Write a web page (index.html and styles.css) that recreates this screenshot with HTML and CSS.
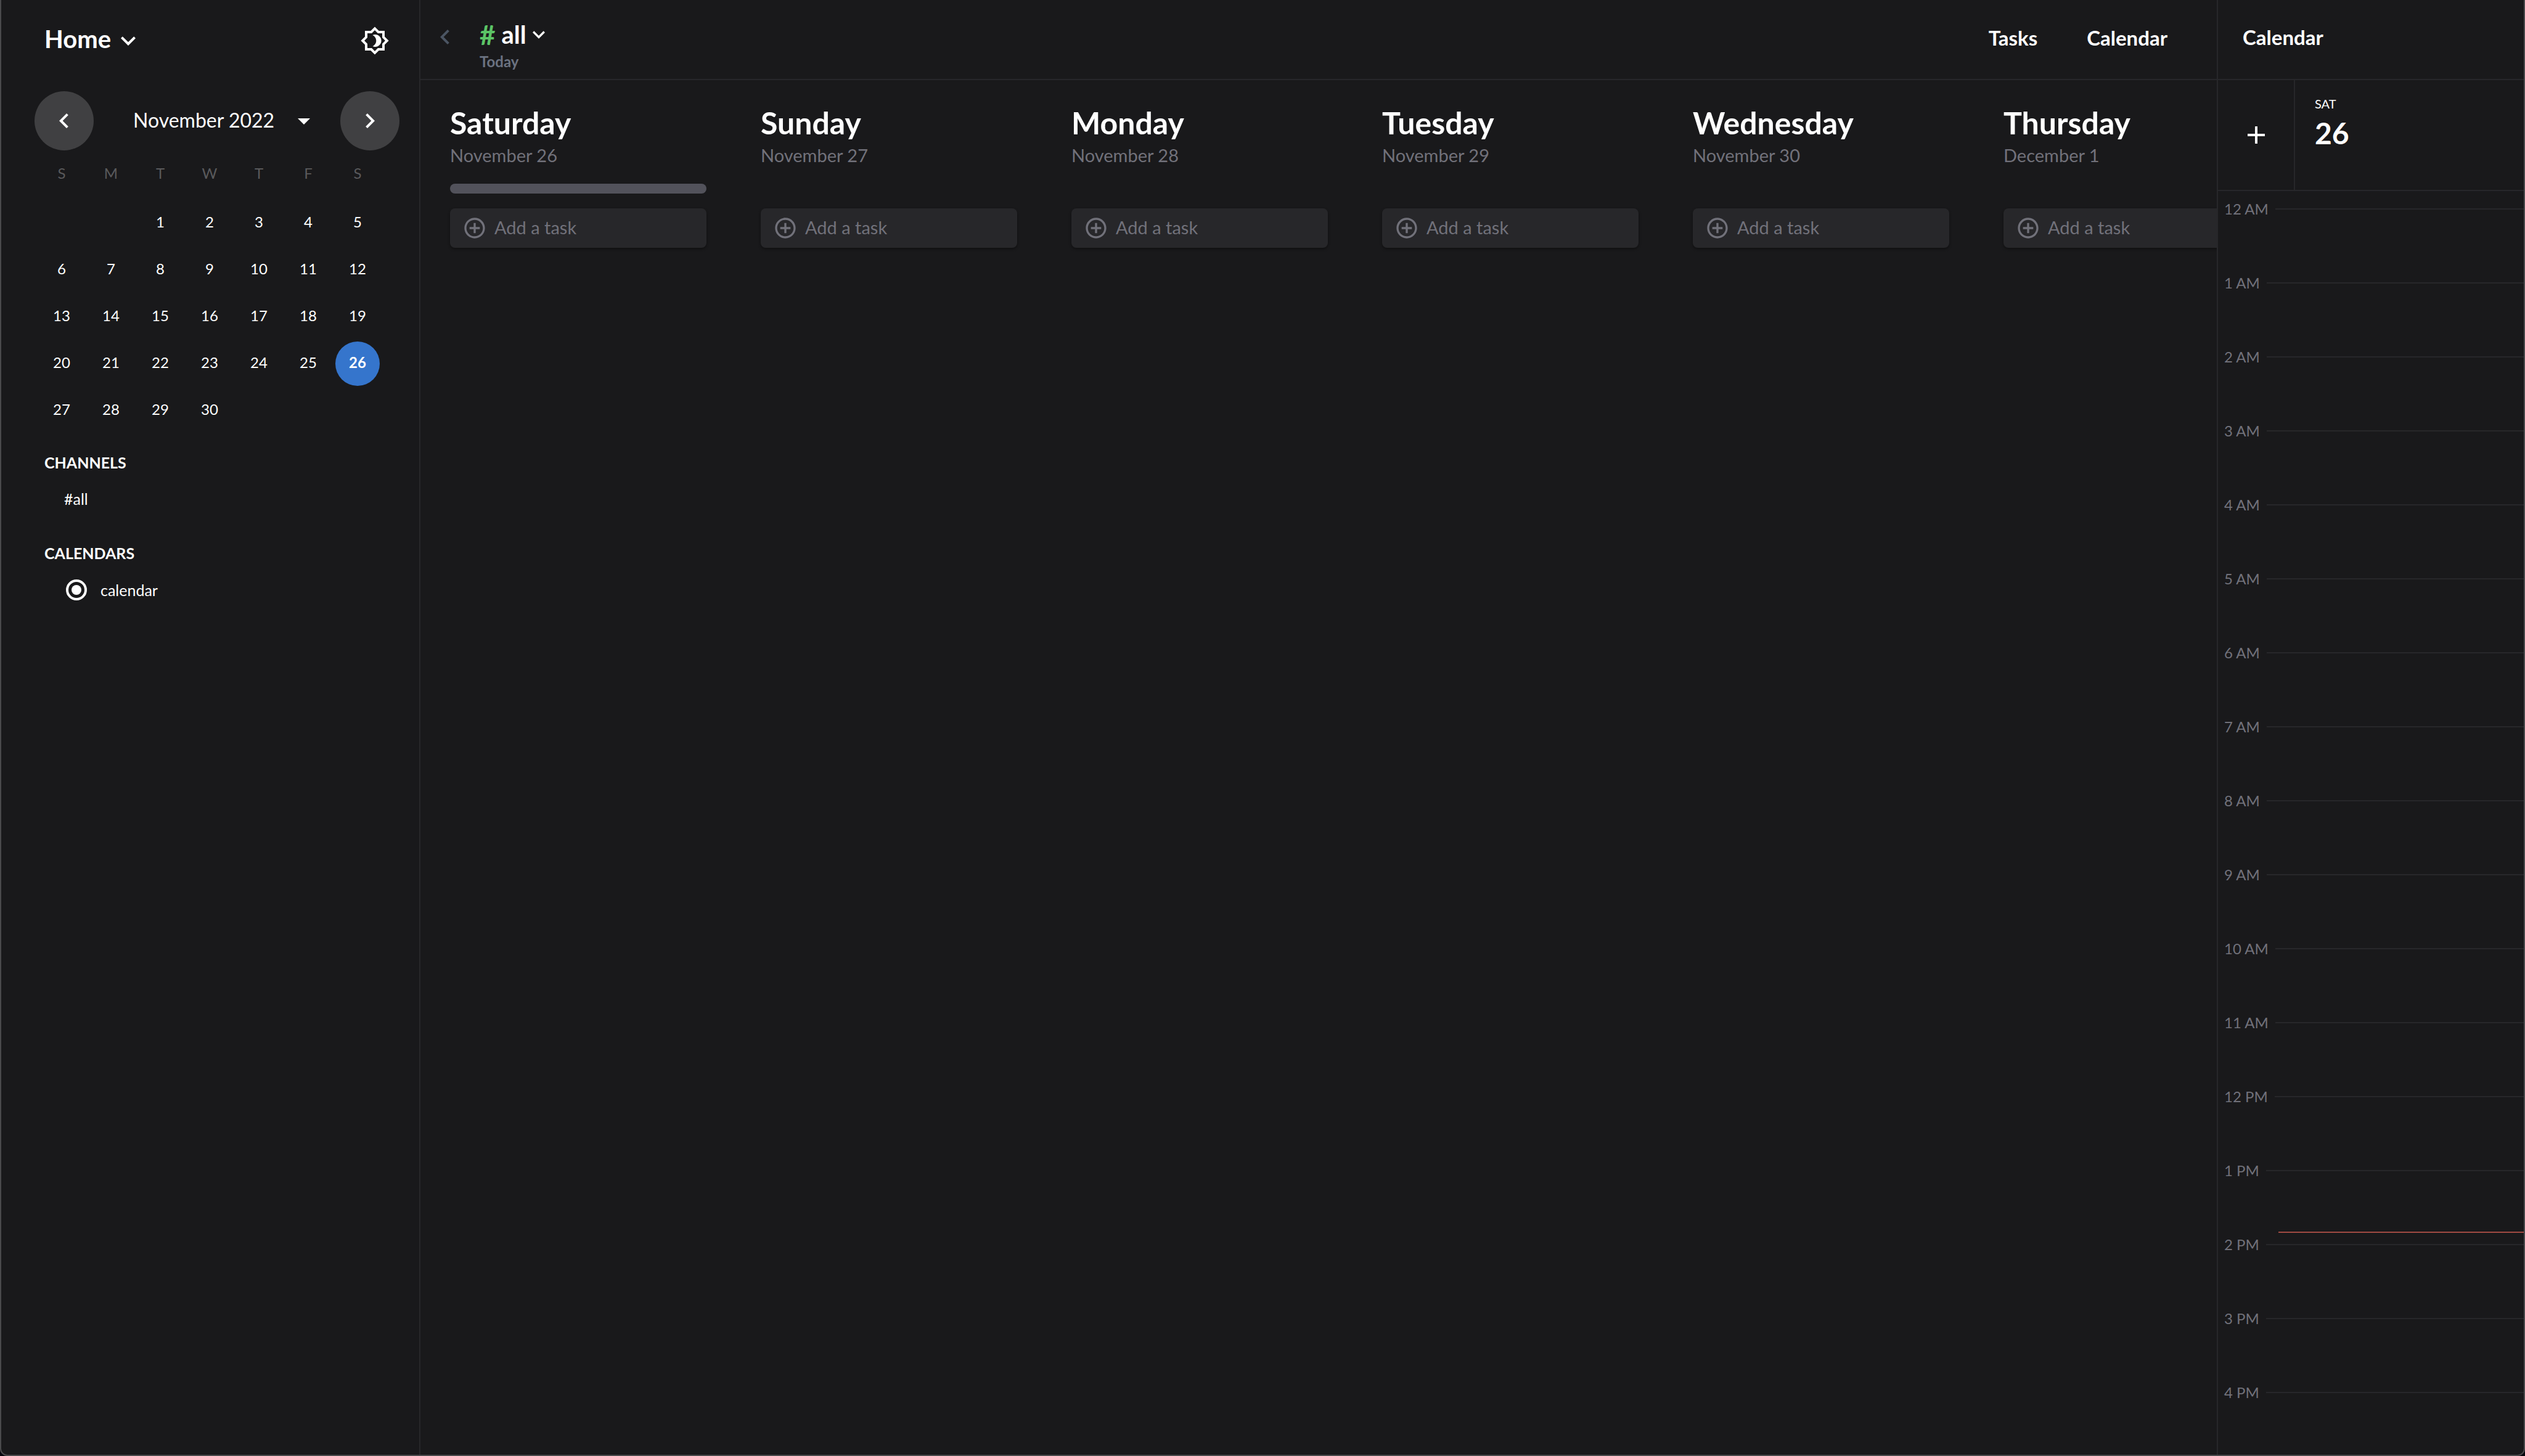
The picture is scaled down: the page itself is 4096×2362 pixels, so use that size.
FILE: index.html
```html
<!DOCTYPE html>
<html lang="en">
<head>
<meta charset="utf-8">
<title>Home - #all</title>
<link rel="stylesheet" href="styles.css">
</head>
<body>
<div class="app">
  <aside class="sidebar">
    <div class="sidebar-head">
      <button class="home" type="button"><span>Home</span><svg class="icon" viewBox="0 0 24 24"><path d="M16.59 8.59 12 13.17 7.41 8.59 6 10l6 6 6-6z"/></svg></button>
      <button class="icon-button" type="button" aria-label="Toggle theme"><svg class="icon" viewBox="0 0 24 24"><path d="M20 8.69V4h-4.69L12 .69 8.69 4H4v4.69L.69 12 4 15.31V20h4.69L12 23.31 15.31 20H20v-4.69L23.31 12 20 8.69zm-2 5.79V18h-3.52L12 20.48 9.52 18H6v-3.52L3.52 12 6 9.52V6h3.52L12 3.52 14.48 6H18v3.52L20.48 12 18 14.48zM12.29 7c-.74 0-1.45.17-2.08.46 1.72.79 2.92 2.53 2.92 4.54s-1.2 3.75-2.92 4.54c.63.29 1.34.46 2.08.46 2.76 0 5-2.24 5-5s-2.24-5-5-5z"/></svg></button>
    </div>
    <div class="month-nav">
      <button class="round" type="button" aria-label="Previous month"><svg class="icon" viewBox="0 0 24 24"><path d="M15.41 7.41 14 6l-6 6 6 6 1.41-1.41L10.83 12z"/></svg></button>
      <button class="month" type="button"><span>November 2022</span><svg class="icon" viewBox="0 0 24 24"><path d="M7 10l5 5 5-5z"/></svg></button>
      <button class="round" type="button" aria-label="Next month"><svg class="icon" viewBox="0 0 24 24"><path d="M10 6 8.59 7.41 13.17 12l-4.58 4.59L10 18l6-6z"/></svg></button>
    </div>
    <table class="days">
      <thead><tr><th>S</th><th>M</th><th>T</th><th>W</th><th>T</th><th>F</th><th>S</th></tr></thead>
      <tbody>
        <tr><td></td><td></td><td><button type="button">1</button></td><td><button type="button">2</button></td><td><button type="button">3</button></td><td><button type="button">4</button></td><td><button type="button">5</button></td></tr>
        <tr><td><button type="button">6</button></td><td><button type="button">7</button></td><td><button type="button">8</button></td><td><button type="button">9</button></td><td><button type="button">10</button></td><td><button type="button">11</button></td><td><button type="button">12</button></td></tr>
        <tr><td><button type="button">13</button></td><td><button type="button">14</button></td><td><button type="button">15</button></td><td><button type="button">16</button></td><td><button type="button">17</button></td><td><button type="button">18</button></td><td><button type="button">19</button></td></tr>
        <tr><td><button type="button">20</button></td><td><button type="button">21</button></td><td><button type="button">22</button></td><td><button type="button">23</button></td><td><button type="button">24</button></td><td><button type="button">25</button></td><td><button class="selected" type="button">26</button></td></tr>
        <tr><td><button type="button">27</button></td><td><button type="button">28</button></td><td><button type="button">29</button></td><td><button type="button">30</button></td><td></td><td></td><td></td></tr>
      </tbody>
    </table>
    <section class="group">
      <h2>CHANNELS</h2>
      <a class="group-item" href="#all">#all</a>
    </section>
    <section class="group">
      <h2>CALENDARS</h2>
      <label class="group-item"><input type="radio" name="calendar" checked>calendar</label>
    </section>
  </aside>

  <main class="main">
    <header class="topbar">
      <button class="icon-button back" type="button" aria-label="Back"><svg class="icon" viewBox="0 0 24 24"><path d="M15.41 7.41 14 6l-6 6 6 6 1.41-1.41L10.83 12z"/></svg></button>
      <div class="channel">
        <button class="channel-name" type="button"><span class="hash">#</span><span>all</span><svg class="icon small" viewBox="0 0 24 24"><path d="M16.59 8.59 12 13.17 7.41 8.59 6 10l6 6 6-6z"/></svg></button>
        <span class="today">Today</span>
      </div>
      <nav class="views"><a href="#tasks">Tasks</a><a href="#calendar">Calendar</a></nav>
    </header>
    <div class="board">
      <section class="column"><h2>Saturday</h2><p>November 26</p><div class="bar filled"></div><button class="add" type="button"><svg class="icon small" viewBox="0 0 24 24"><path d="M13 7h-2v4H7v2h4v4h2v-4h4v-2h-4V7zm-1-5C6.48 2 2 6.48 2 12s4.48 10 10 10 10-4.480 10-10S17.520 2 12 2zm0 18c-4.410 0-8-3.590-8-8s3.590-8 8-8 8 3.590 8 8-3.590 8-8 8z"/></svg><span>Add a task</span></button></section>
      <section class="column"><h2>Sunday</h2><p>November 27</p><div class="bar"></div><button class="add" type="button"><svg class="icon small" viewBox="0 0 24 24"><path d="M13 7h-2v4H7v2h4v4h2v-4h4v-2h-4V7zm-1-5C6.48 2 2 6.48 2 12s4.48 10 10 10 10-4.480 10-10S17.520 2 12 2zm0 18c-4.410 0-8-3.590-8-8s3.590-8 8-8 8 3.590 8 8-3.590 8-8 8z"/></svg><span>Add a task</span></button></section>
      <section class="column"><h2>Monday</h2><p>November 28</p><div class="bar"></div><button class="add" type="button"><svg class="icon small" viewBox="0 0 24 24"><path d="M13 7h-2v4H7v2h4v4h2v-4h4v-2h-4V7zm-1-5C6.48 2 2 6.48 2 12s4.48 10 10 10 10-4.480 10-10S17.520 2 12 2zm0 18c-4.410 0-8-3.590-8-8s3.590-8 8-8 8 3.590 8 8-3.590 8-8 8z"/></svg><span>Add a task</span></button></section>
      <section class="column"><h2>Tuesday</h2><p>November 29</p><div class="bar"></div><button class="add" type="button"><svg class="icon small" viewBox="0 0 24 24"><path d="M13 7h-2v4H7v2h4v4h2v-4h4v-2h-4V7zm-1-5C6.48 2 2 6.48 2 12s4.48 10 10 10 10-4.480 10-10S17.520 2 12 2zm0 18c-4.410 0-8-3.590-8-8s3.590-8 8-8 8 3.590 8 8-3.590 8-8 8z"/></svg><span>Add a task</span></button></section>
      <section class="column"><h2>Wednesday</h2><p>November 30</p><div class="bar"></div><button class="add" type="button"><svg class="icon small" viewBox="0 0 24 24"><path d="M13 7h-2v4H7v2h4v4h2v-4h4v-2h-4V7zm-1-5C6.48 2 2 6.48 2 12s4.48 10 10 10 10-4.480 10-10S17.520 2 12 2zm0 18c-4.410 0-8-3.590-8-8s3.590-8 8-8 8 3.590 8 8-3.590 8-8 8z"/></svg><span>Add a task</span></button></section>
      <section class="column"><h2>Thursday</h2><p>December 1</p><div class="bar"></div><button class="add" type="button"><svg class="icon small" viewBox="0 0 24 24"><path d="M13 7h-2v4H7v2h4v4h2v-4h4v-2h-4V7zm-1-5C6.48 2 2 6.48 2 12s4.48 10 10 10 10-4.480 10-10S17.520 2 12 2zm0 18c-4.410 0-8-3.590-8-8s3.590-8 8-8 8 3.590 8 8-3.590 8-8 8z"/></svg><span>Add a task</span></button></section>
    </div>
  </main>

  <aside class="panel">
    <header class="topbar panel-head"><h2>Calendar</h2></header>
    <div class="day-head">
      <button class="new-event" type="button" aria-label="New event"><svg class="icon" viewBox="0 0 24 24"><path d="M19 13h-6v6h-2v-6H5v-2h6V5h2v6h6z"/></svg></button>
      <div class="day"><span class="day-name">SAT</span><span class="day-number">26</span></div>
    </div>
    <ol class="hours">
      <li>12 AM</li><li>1 AM</li><li>2 AM</li><li>3 AM</li><li>4 AM</li><li>5 AM</li><li>6 AM</li><li>7 AM</li><li>8 AM</li><li>9 AM</li><li>10 AM</li><li>11 AM</li><li>12 PM</li><li>1 PM</li><li>2 PM</li><li>3 PM</li><li>4 PM</li>
      <li class="now" style="top:1688px" aria-label="Current time"></li>
    </ol>
  </aside>
  <div class="frame"></div>
</div>
</body>
</html>
```
FILE: styles.css
```css
* { box-sizing: border-box; margin: 0; padding: 0; }

:root {
  --bg: #19191b;
  --line: #27272a;
  --muted: #71717a;
}

body {
  background: var(--bg);
  color: #fff;
  font-family: Lato, "Open Sans", sans-serif;
  font-size: 24px;
}

button {
  display: flex;
  align-items: center;
  border: 0;
  background: none;
  color: inherit;
  font: inherit;
}

a { color: inherit; text-decoration: none; }

.icon { flex: none; width: 48px; height: 48px; fill: currentColor; }
.icon.small { width: 40px; height: 40px; }

.app {
  position: relative;
  display: flex;
  height: 100vh;
  overflow: hidden;
}

/* window outline, drawn over the page edges */
.frame {
  position: absolute;
  inset: -2px 0 0;
  border: 2px solid #4a4a4c;
  border-radius: 0 0 12px 12px;
  box-shadow: 0 0 0 8px #05050c;
  pointer-events: none;
}

/* sidebar */
.sidebar {
  flex: none;
  width: 682px;
  padding: 42px 32px 0 56px;
  border-right: 2px solid var(--line);
}

.sidebar-head {
  display: flex;
  justify-content: space-between;
  padding: 0 16px;
}

.home {
  align-items: flex-start;
  gap: 4px;
  font-size: 40px;
  font-weight: 700;
  line-height: 42px;
}

.month-nav {
  display: flex;
  justify-content: space-between;
  margin-top: 58px;
}

.round {
  justify-content: center;
  width: 96px;
  height: 96px;
  border-radius: 50%;
  background: #404042;
}

.month {
  flex: 1;
  justify-content: space-between;
  padding: 0 35px 0 64px;
  font-size: 32px;
}

.month span { padding-bottom: 4px; }

.days {
  width: 560px;
  margin-left: 4px;
  border-collapse: collapse;
  table-layout: fixed;
}

.days th {
  height: 80px;
  padding-bottom: 8px;
  color: #5a5a5c;
  font-weight: 400;
}

.days td { height: 76px; padding: 2px 4px; }

.days button {
  justify-content: center;
  width: 72px;
  height: 72px;
  padding-bottom: 6px;
  border-radius: 50%;
}

.days .selected { background: #3575cc; font-weight: 700; }

.group { padding: 30px 16px 26px; font-size: 25px; }

.group h2 {
  margin-bottom: 27px;
  font-size: 25px;
  line-height: 32px;
}

.group-item {
  display: flex;
  align-items: center;
  gap: 22px;
  padding-left: 32px;
  line-height: 32px;
}

.group-item input {
  appearance: none;
  flex: none;
  width: 34px;
  height: 34px;
  margin-left: 3px;
  padding: 5px;
  border: 4px solid #fff;
  border-radius: 50%;
  background: #fff content-box;
}

/* task board */
.main { flex: 1; min-width: 0; }

.topbar {
  display: flex;
  align-items: flex-start;
  height: 130px;
  padding: 36px 80px 0 16px;
  border-bottom: 2px solid var(--line);
}

.back { color: #4b5563; }

.channel { margin-left: 32px; }

.channel-name {
  height: 40px;
  font-size: 40px;
  font-weight: 700;
}

.hash {
  margin-right: 10px;
  color: #5bc466;
  font-size: 44px;
}

.today {
  display: block;
  margin-top: 12px;
  color: #6b7280;
  font-weight: 700;
  line-height: 24px;
}

.views {
  display: flex;
  gap: 80px;
  margin-left: auto;
  font-size: 33px;
  font-weight: 700;
  line-height: 50px;
}

.board {
  display: flex;
  gap: 88px;
  padding: 40px 0 24px 48px;
  overflow: hidden;
}

.column { flex: none; width: 416px; }

.column h2 { font-size: 50px; line-height: 58px; }

.column p {
  margin-top: 8px;
  color: var(--muted);
  font-size: 29px;
  line-height: 32px;
}

.bar { height: 16px; margin: 30px 0 24px; border-radius: 8px; }
.bar.filled { background: #52525b; }

.add {
  gap: 12px;
  width: 100%;
  height: 64px;
  padding-left: 20px;
  border-radius: 8px;
  background: var(--line);
  box-shadow: 0 2px 4px rgb(0 0 0 / 40%);
  color: var(--muted);
  font-size: 29px;
}

.add span { padding-bottom: 4px; }

/* day calendar */
.panel {
  flex: none;
  width: 500px;
  border-left: 2px solid var(--line);
}

.panel-head { padding-left: 40px; }
.panel-head h2 { font-size: 33px; line-height: 48px; }

.day-head {
  display: flex;
  height: 180px;
  border-bottom: 2px solid var(--line);
}

.new-event {
  justify-content: center;
  width: 125px;
  border-right: 2px solid var(--line);
}

.day {
  display: flex;
  flex-direction: column;
  gap: 8px;
  padding: 26px 0 0 32px;
}

.day-name { font-size: 20px; line-height: 24px; }
.day-number { font-size: 48px; font-weight: 700; line-height: 56px; }

.hours {
  position: relative;
  padding-top: 17px;
  color: var(--muted);
  list-style: none;
}

.hours li {
  display: flex;
  align-items: center;
  gap: 11px;
  margin-bottom: 96px;
  padding-left: 10px;
  line-height: 24px;
}

.hours li::after {
  content: "";
  flex: 1;
  height: 2px;
  background: var(--line);
}

.hours .now {
  position: absolute;
  right: 0;
  left: 98px;
  height: 2px;
  margin: 0;
  background: #a04a43;
}

.hours .now::after { display: none; }
```
